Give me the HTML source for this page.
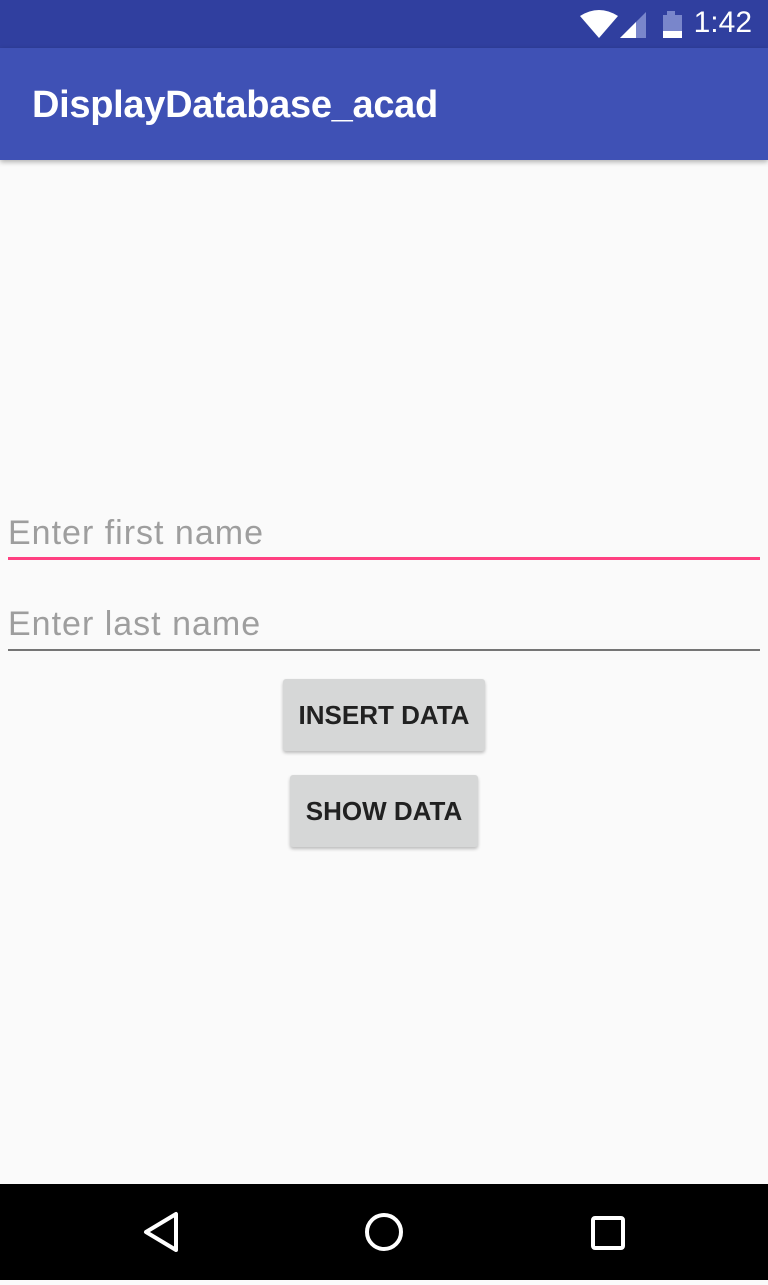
<!DOCTYPE html>
<html><head><meta charset="utf-8"><style>
*{margin:0;padding:0;box-sizing:border-box}
body{width:768px;height:1280px;background:#fafafa;font-family:"Liberation Sans",sans-serif;position:relative;overflow:hidden}
.sb{position:absolute;top:0;left:0;width:768px;height:48px;background:#303f9f}
.ab{position:absolute;top:48px;left:0;width:768px;height:112px;background:#3f51b5;box-shadow:0 2px 5px rgba(0,0,0,.3)}
.ab span{position:absolute;left:32px;top:36px;color:#fff;font-size:38px;font-weight:bold;letter-spacing:-0.3px}
.time{position:absolute;right:16px;top:6px;color:#fff;font-size:30px}
.in{position:absolute;left:8px;width:752px;color:#9e9e9e;font-size:34px;letter-spacing:1px}
.btn{position:absolute;background:#d6d7d7;border-radius:3px;box-shadow:0 2px 3px rgba(0,0,0,.25);color:#212121;font-size:26px;font-weight:600;text-align:center;line-height:72px}
.nav{position:absolute;left:0;top:1184px;width:768px;height:96px;background:#000}
</style></head><body>
<div class="sb">
<svg style="position:absolute;left:578px;top:8px" width="120" height="32">
<path d="M2 8 Q21 -4 40 8 L21 30 Z" fill="#fff"/>
<path d="M42 30 L68 30 L68 4 Z" fill="#7986cb"/>
<path d="M42 30 L58 30 L58 14 Z" fill="#fff"/>
<rect x="89" y="3" width="8" height="4" fill="#7986cb"/>
<rect x="85" y="7" width="19" height="23" fill="#7986cb"/>
<rect x="85" y="23" width="19" height="7" fill="#fff"/>
</svg>
<div class="time">1:42</div>
</div>
<div class="ab"><span>DisplayDatabase_acad</span></div>
<div class="in" style="top:514px">Enter first name</div>
<div style="position:absolute;left:8px;top:557px;width:752px;height:3px;background:#ff4081"></div>
<div class="in" style="top:605px">Enter last name</div>
<div style="position:absolute;left:8px;top:649px;width:752px;height:2px;background:#757575"></div>
<div class="btn" style="left:283px;top:679px;width:202px;height:72px">INSERT DATA</div>
<div class="btn" style="left:290px;top:775px;width:188px;height:72px">SHOW DATA</div>
<div class="nav">
<svg width="768" height="96">
<path d="M176 30 L176 66 L146 48 Z" fill="none" stroke="#fff" stroke-width="4" stroke-linejoin="round"/>
<circle cx="384" cy="48" r="17" fill="none" stroke="#fff" stroke-width="4"/>
<rect x="593" y="34" width="30" height="30" fill="none" stroke="#fff" stroke-width="4" rx="2"/>
</svg>
</div>
</body></html>
